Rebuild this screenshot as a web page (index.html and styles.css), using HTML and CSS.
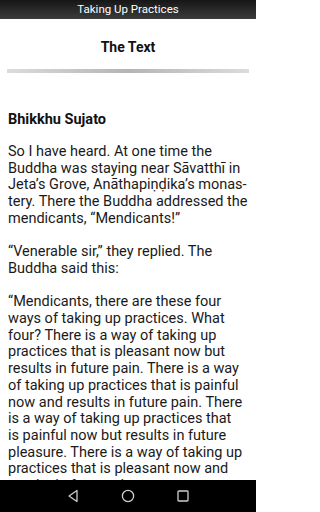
FILE: index.html
```html
<!DOCTYPE html>
<html>
<head>
<meta charset="utf-8">
<link rel="stylesheet" href="styles.css">
</head>
<body>
<div class="screen">
<header class="topbar">Taking Up Practices</header>
<main class="content">
  <h1 class="heading">The Text</h1>
  <div class="divider"></div>
  <h2 class="author">Bhikkhu Sujato</h2>
  <p class="para">So I have heard. At one time the Buddha was staying near Sāvatthī in Jeta’s Grove, Anāthapiṇḍika’s monas&shy;tery. There the Buddha addressed the mendicants, “Mendicants!”</p>
  <p class="para">“Venerable sir,” they replied. The Buddha said this:</p>
  <p class="para">“Mendicants, there are these four ways of taking up practices. What four? There is a way of taking up practices that is pleasant now but results in future pain. There is a way of taking up practices that is painful now and results in future pain. There is a way of taking up practices that<br>is painful now but results in future pleasure. There is a way of taking up practices that is pleasant now and results in future pleasure.</p>
</main>
<nav class="navbar">
  <svg class="navicon" width="14" height="14" viewBox="0 0 14 14"><path d="M11 1.5 L3 7 L11 12.5 Z" fill="none" stroke="#cfcfcf" stroke-width="1.3" stroke-linejoin="round"/></svg>
  <svg class="navicon" width="14" height="14" viewBox="0 0 14 14"><circle cx="7" cy="7" r="5.6" fill="none" stroke="#cfcfcf" stroke-width="1.3"/></svg>
  <svg class="navicon" width="14" height="14" viewBox="0 0 14 14"><rect x="2" y="2" width="10" height="10" rx="0.8" fill="none" stroke="#cfcfcf" stroke-width="1.3"/></svg>
</nav>
</div>
</body>
</html>
```
FILE: styles.css
```css
html, body {
  margin: 0;
  padding: 0;
  background: #ffffff;
}
body {
  font-family: Roboto, "Liberation Sans", sans-serif;
  color: #111;
}
.screen {
  position: relative;
  width: 256px;
  height: 512px;
  overflow: hidden;
  display: flex;
  flex-direction: column;
}
.topbar {
  flex: none;
  height: 19px;
  line-height: 19px;
  text-align: center;
  color: #ffffff;
  font-size: 11.5px;
  background: linear-gradient(to bottom, #161616, #3c3c3c);
}
.content {
  flex: 1;
  min-height: 0;
  overflow: hidden;
  padding: 0 8px;
}
.heading {
  margin: 19px 0 0;
  font-size: 14px;
  line-height: 18px;
  font-weight: 700;
  text-align: center;
  color: #111;
}
.divider {
  margin: 13px -1px 0;
  height: 4px;
  background: linear-gradient(to right, #dcdcdc, #b4b4b4 50%, #dcdcdc);
}
.author {
  margin: 39px 0 16px;
  font-size: 14.5px;
  line-height: 16px;
  font-weight: 700;
  color: #111;
}
.para {
  margin: 0 0 16.7px;
  font-size: 14.5px;
  line-height: 16.7px;
  color: #1a1a1a;
  hyphens: manual;
}
.navbar {
  position: absolute;
  left: 0;
  right: 0;
  bottom: 0;
  height: 32px;
  background: #000;
  display: flex;
  justify-content: center;
  align-items: center;
  gap: 41px;
}
.navicon {
  display: block;
}
```
